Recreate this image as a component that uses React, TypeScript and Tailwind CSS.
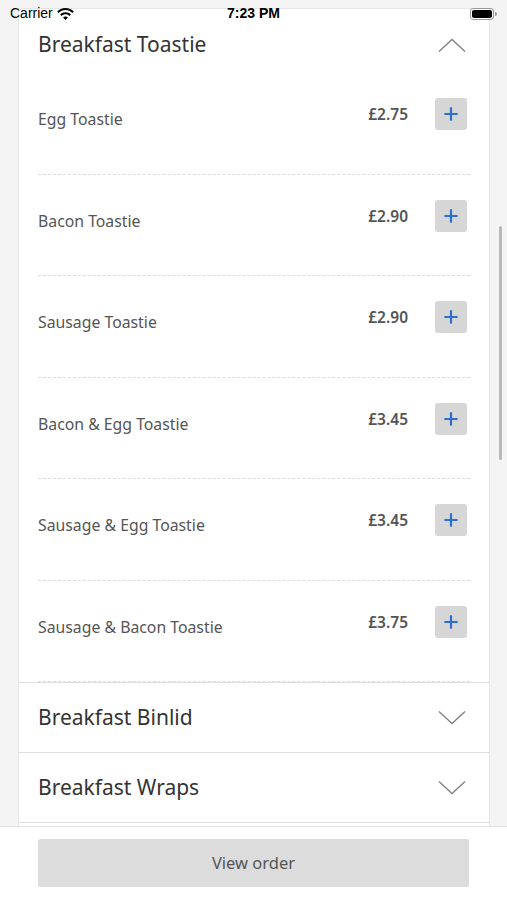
import { Plus } from 'lucide-react'

const items = [
  { name: 'Egg Toastie', price: '£2.75' },
  { name: 'Bacon Toastie', price: '£2.90' },
  { name: 'Sausage Toastie', price: '£2.90' },
  { name: 'Bacon & Egg Toastie', price: '£3.45' },
  { name: 'Sausage & Egg Toastie', price: '£3.45' },
  { name: 'Sausage & Bacon Toastie', price: '£3.75' },
]

function Chevron({ up }: { up?: boolean }) {
  return (
    <svg width="28" height="15" viewBox="0 0 28 15" fill="none" stroke="#808080" strokeWidth="1.3">
      {up ? <path d="M1 13.5 L14 1.5 L27 13.5" /> : <path d="M1 1.5 L14 13.5 L27 1.5" />}
    </svg>
  )
}

function StatusBar() {
  return (
    <div className="absolute inset-x-0 top-0 flex h-[27px] items-center justify-between px-[10px] font-['Liberation_Sans',sans-serif] text-[14px] text-black">
      <div className="flex items-center gap-1">
        <span>Carrier</span>
        <svg width="17" height="12" viewBox="0 0 17 12" fill="#000">
          <path d="M8.5 0C5.2 0 2.3 1.3 0.2 3.4l1.5 1.5C3.4 3.2 5.8 2.1 8.5 2.1s5.1 1.1 6.8 2.8l1.5-1.5C14.7 1.3 11.8 0 8.5 0z" />
          <path d="M8.5 4.2c-2.1 0-4 .8-5.4 2.2l1.5 1.5c1-1 2.4-1.6 3.9-1.6s2.9.6 3.9 1.6l1.5-1.5C12.5 5 10.6 4.2 8.5 4.2z" />
          <path d="M8.5 8.4c-.9 0-1.8.4-2.4 1L8.5 12l2.4-2.6c-.6-.6-1.5-1-2.4-1z" />
        </svg>
      </div>
      <span className="absolute left-1/2 -translate-x-1/2 font-semibold">7:23 PM</span>
      <div className="flex items-center">
        <div className="h-[12px] w-[24px] rounded-[3px] border border-[#999] p-[1px]">
          <div className="h-full w-full rounded-[2px] bg-black" />
        </div>
        <div className="ml-[1px] h-[4px] w-[2px] rounded-r-sm bg-[#999]" />
      </div>
    </div>
  )
}

export default function App() {
  return (
    <div className="relative flex h-[900px] w-[507px] flex-col overflow-hidden bg-[#f4f4f4] font-['Noto_Sans',sans-serif]">
      <div className="h-[826px] overflow-hidden pt-[8px]">
        <div className="ml-[18px] w-[472px] border-x border-t border-[#e6e6e6] bg-white">
          <div className="flex h-[64px] items-center justify-between pl-[19px] pr-[23px] pt-[8px]">
            <span className="text-[21px] text-[#333]">Breakfast Toastie</span>
            <Chevron up />
          </div>
          <div className="pl-[19px] pr-[19px]">
            {items.map((it) => (
              <div key={it.name} className="flex h-[101.5px] items-start border-b border-dashed border-[#dcdcdc]">
                <span className="mt-[35px] flex-1 text-[15.8px] text-[#555]">{it.name}</span>
                <span className="mt-[30px] text-[15.5px] font-semibold text-[#555]">{it.price}</span>
                <button className="ml-[27px] mr-[3px] mt-[25px] flex h-[32px] w-[32px] items-center justify-center rounded-[3px] bg-[#d6d6d6]">
                  <Plus size={20} strokeWidth={2.6} color="#2c6fd1" />
                </button>
              </div>
            ))}
          </div>
          {['Breakfast Binlid', 'Breakfast Wraps', ''].map((s, i) => (
            <div key={i} className="flex h-[70px] items-center justify-between border-t border-[#e0e0e0] pl-[19px] pr-[23px]">
              <span className="text-[21px] text-[#333]">{s}</span>
              {s && <Chevron />}
            </div>
          ))}
        </div>
      </div>
      <div className="flex-1 border-t border-[#e2e2e2] bg-white px-[38px] pt-[12px]">
        <button className="flex h-[48px] w-full items-center justify-center rounded-[2px] bg-[#dcdcdc] text-[16.5px] text-[#555]">
          View order
        </button>
      </div>
      <div className="absolute left-[499px] top-[226px] h-[234px] w-[3px] rounded-full bg-[#b8b8b8]" />
      <StatusBar />
    </div>
  )
}
